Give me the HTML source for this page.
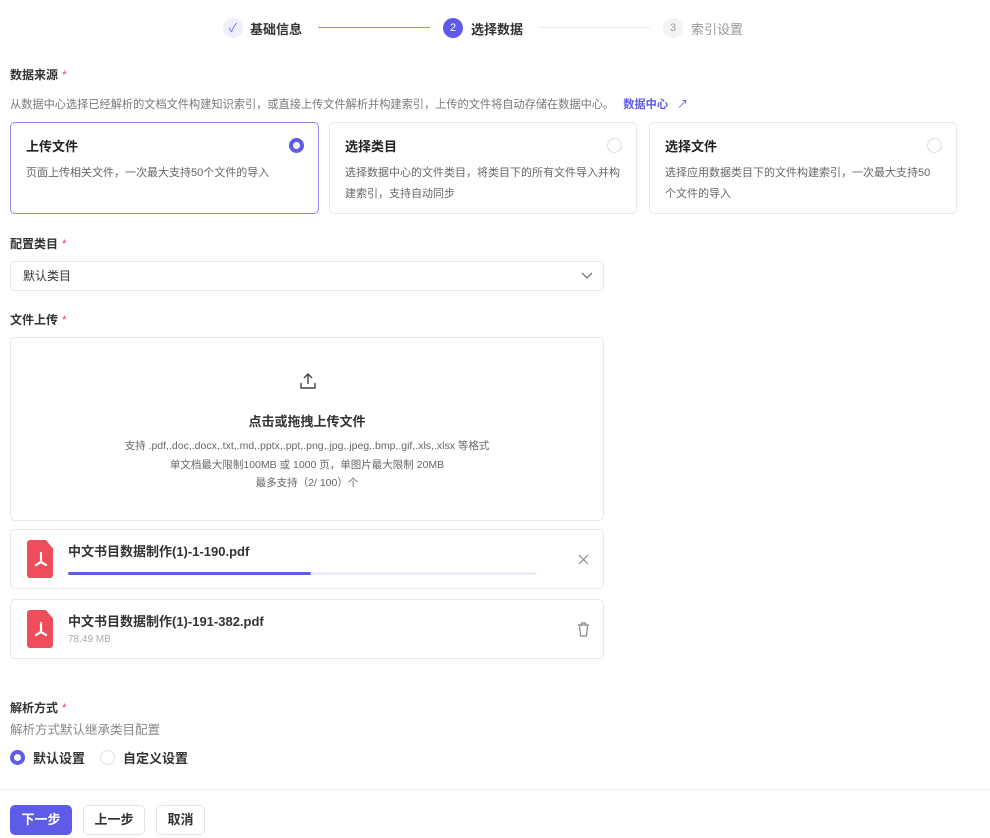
<!DOCTYPE html>
<html><head><meta charset="utf-8"><style>
*{box-sizing:border-box;margin:0;padding:0}
body{width:990px;height:838px;background:#fff;font-family:"Liberation Sans","Noto Sans CJK SC",sans-serif;color:#1f2329;position:relative;overflow:hidden}
.a{position:absolute;white-space:nowrap}
.lbl{font-size:12px;font-weight:bold;color:#333}
.lbl i{color:#f5455a;font-style:normal;margin-left:4px;font-weight:normal}
.card{position:absolute;top:122px;height:92px;border:1px solid #e6e8ee;border-radius:5px;padding:13px 15px}
.card h4{font-size:13px;font-weight:bold;color:#222;margin-bottom:8px}
.card p{font-size:11px;color:#666;line-height:21px;white-space:normal}
.rad{position:absolute;right:14px;top:15px;width:15px;height:15px;border-radius:50%;border:1px solid #dcdde3}
.on{border:4px solid #5d5be8;background:#fff}
.box{position:absolute;left:10px;width:594px;border:1px solid #e6e8ee;border-radius:5px}
.pdf{position:absolute;left:16px;width:26px;height:38px;background:#f04d5c;border-radius:3px;clip-path:polygon(0 0,72% 0,100% 22%,100% 100%,0 100%)}
.btn{position:absolute;top:805px;height:30px;border-radius:5px;font-size:13px;font-weight:bold;text-align:center;line-height:28px;border:1px solid #e3e4e8;color:#333}
.fn{font-size:13px;font-weight:600;color:#333}
</style></head><body>
<div class="a" style="left:223px;top:18px;width:20px;height:20px;border-radius:50%;background:#efeffc;color:#6a66e6;font-size:12px;text-align:center;line-height:20px">✓</div>
<div class="a" style="left:250px;top:19px;font-size:13px;font-weight:bold;color:#333">基础信息</div>
<div class="a" style="left:318px;top:27px;width:112px;height:1px;background:#8c89ee"></div>
<div class="a" style="left:443px;top:18px;width:20px;height:20px;border-radius:50%;background:#5d5be8;color:#fff;font-size:11px;text-align:center;line-height:20px">2</div>
<div class="a" style="left:471px;top:19px;font-size:13px;font-weight:bold;color:#333">选择数据</div>
<div class="a" style="left:538px;top:27px;width:112px;height:1px;background:#e8e9ee"></div>
<div class="a" style="left:663px;top:18px;width:20px;height:20px;border-radius:50%;background:#f2f3f5;color:#999;font-size:11px;text-align:center;line-height:20px">3</div>
<div class="a" style="left:691px;top:19px;font-size:13px;color:#999">索引设置</div>

<div class="a lbl" style="left:10px;top:66px">数据来源<i>*</i></div>
<div class="a" style="left:10px;top:96px;font-size:11.2px;color:#777">从数据中心选择已经解析的文档文件构建知识索引，或直接上传文件解析并构建索引，上传的文件将自动存储在数据中心。 <span style="color:#5d5be8;font-weight:bold;margin-left:6px">数据中心</span> <span style="color:#5d5be8;margin-left:6px">↗</span></div>

<div class="card" style="left:10px;width:309px;border-color:#8e8af0"><h4>上传文件</h4><p>页面上传相关文件，一次最大支持50个文件的导入</p><div class="rad on"></div></div>
<div class="card" style="left:329px;width:308px"><h4>选择类目</h4><p>选择数据中心的文件类目，将类目下的所有文件导入并构建索引，支持自动同步</p><div class="rad"></div></div>
<div class="card" style="left:649px;width:308px"><h4>选择文件</h4><p>选择应用数据类目下的文件构建索引，一次最大支持50个文件的导入</p><div class="rad"></div></div>

<div class="a lbl" style="left:10px;top:235px">配置类目<i>*</i></div>
<div class="box" style="top:261px;height:30px;font-size:12px;padding:0 12px;line-height:28px;color:#333">默认类目
<svg style="position:absolute;right:10px;top:10px" width="12" height="8"><path d="M1 1l5 5 5-5" stroke="#777" fill="none" stroke-width="1.3"/></svg></div>

<div class="a lbl" style="left:10px;top:311px">文件上传<i>*</i></div>
<div class="box" style="top:337px;height:184px;text-align:center">
<svg style="position:absolute;left:288px;top:34px" width="18" height="18" viewBox="0 0 18 18"><path d="M9 12V2M5 6l4-4 4 4M2 11v5h14v-5" stroke="#444" fill="none" stroke-width="1.4"/></svg>
<div style="position:absolute;left:0;right:0;top:73px;font-size:13px;font-weight:bold;color:#333">点击或拖拽上传文件</div>
<div style="position:absolute;left:0;right:0;top:99px;font-size:10.5px;color:#666;line-height:18.5px">支持 .pdf,.doc,.docx,.txt,.md,.pptx,.ppt,.png,.jpg,.jpeg,.bmp,.gif,.xls,.xlsx 等格式<br>单文档最大限制100MB 或 1000 页，单图片最大限制 20MB<br>最多支持（2/ 100）个</div>
</div>

<div class="box" style="top:529px;height:60px">
<div class="pdf" style="top:10px"></div>
<svg class="a" style="left:22px;top:20px" width="16" height="20" viewBox="0 0 16 20"><path d="M8 3v9M8 12l-5 3M8 12l5 3" stroke="#fff" stroke-width="2.2" fill="none" stroke-linecap="round"/></svg>
<div class="a fn" style="left:57px;top:11px">中文书目数据制作(1)-1-190.pdf</div>
<div class="a" style="left:57px;top:42px;width:469px;height:3px;background:#eeeefb;border-radius:2px"><div style="width:243px;height:3px;background:#5d5be8;border-radius:2px"></div></div>
<svg class="a" style="left:567px;top:24px" width="11" height="11"><path d="M1 1l9 9M10 1l-9 9" stroke="#888" stroke-width="1.2"/></svg>
</div>
<div class="box" style="top:599px;height:60px">
<div class="pdf" style="top:10px"></div>
<svg class="a" style="left:22px;top:20px" width="16" height="20" viewBox="0 0 16 20"><path d="M8 3v9M8 12l-5 3M8 12l5 3" stroke="#fff" stroke-width="2.2" fill="none" stroke-linecap="round"/></svg>
<div class="a fn" style="left:57px;top:11px">中文书目数据制作(1)-191-382.pdf</div>
<div class="a" style="left:57px;top:34px;font-size:10px;color:#aaa">78.49 MB</div>
<svg class="a" style="left:566px;top:22px" width="13" height="15" viewBox="0 0 13 15"><path d="M1 3h11M4.5 3V1h4v2M2.5 3l1 11h6l1-11" stroke="#888" fill="none" stroke-width="1.2"/></svg>
</div>

<div class="a lbl" style="left:10px;top:699px">解析方式<i>*</i></div>
<div class="a" style="left:10px;top:719px;font-size:12.5px;color:#888">解析方式默认继承类目配置</div>
<div class="a" style="left:10px;top:750px;width:15px;height:15px;border-radius:50%;border:4px solid #5d5be8"></div>
<div class="a" style="left:33px;top:748px;font-size:13px;font-weight:bold;color:#333">默认设置</div>
<div class="a" style="left:100px;top:750px;width:15px;height:15px;border-radius:50%;border:1px solid #dcdde3"></div>
<div class="a" style="left:123px;top:748px;font-size:13px;font-weight:bold;color:#333">自定义设置</div>

<div class="a" style="left:0;top:789px;width:990px;height:1px;background:#eceef2"></div>
<div class="btn" style="left:10px;width:62px;background:#5d5be8;border-color:#5d5be8;color:#fff">下一步</div>
<div class="btn" style="left:83px;width:62px">上一步</div>
<div class="btn" style="left:156px;width:49px">取消</div>
</body></html>
